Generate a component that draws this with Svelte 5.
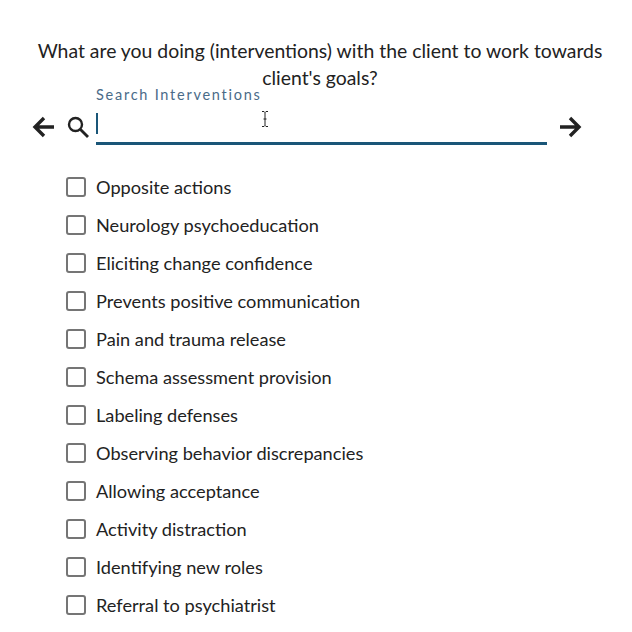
<script lang="ts">
  const items = [
    'Opposite actions',
    'Neurology psychoeducation',
    'Eliciting change confidence',
    'Prevents positive communication',
    'Pain and trauma release',
    'Schema assessment provision',
    'Labeling defenses',
    'Observing behavior discrepancies',
    'Allowing acceptance',
    'Activity distraction',
    'Identifying new roles',
    'Referral to psychiatrist',
  ]
  let query = $state('')
  let checked: Record<string, boolean> = $state({})
</script>

<div class="page">
  <h2 class="question">What are you doing (interventions) with the client to work towards client's goals?</h2>

  <div class="search-row">
    <button class="nav back" aria-label="Back">
      <svg width="24" height="24" viewBox="0 0 24 24"><path d="M23 12H5M13 3 4 12l9 9" fill="none" stroke="#222" stroke-width="3.400"/></svg>
    </button>
    <svg class="search-icon" width="24" height="24" viewBox="0 0 24 24"><circle cx="9.500" cy="9.500" r="6.500" fill="none" stroke="#222" stroke-width="2.400"/><path d="m14.500 14.500 7.500 7.500" stroke="#222" stroke-width="2.800"/></svg>
    <label class="field">
      <span class="field-label">Search Interventions</span>
      <span class="caret"></span>
      <input bind:value={query} aria-label="Search Interventions" />
      <svg class="ibeam" width="8" height="16" viewBox="0 0 8 16"><path d="M1 .5h2l1 1 1-1h2M4 1.500v13M1 15.500h2l1-1 1 1h2M2.500 8h3" fill="none" stroke="#222" stroke-width="1"/></svg>
    </label>
    <button class="nav forward" aria-label="Forward">
      <svg width="24" height="24" viewBox="0 0 24 24"><path d="M1 12h18M11 3l9 9-9 9" fill="none" stroke="#222" stroke-width="3.400"/></svg>
    </button>
  </div>

  <ul class="list">
    {#each items as item}
      <li>
        <label class="row">
          <input type="checkbox" bind:checked={checked[item]} />
          <span class="box"></span>
          <span>{item}</span>
        </label>
      </li>
    {/each}
  </ul>
</div>

<style>
  :global(body) {
    background: #fff;
    overflow: hidden;
  }

  .page {
    width: 632px;
    height: 632px;
    padding-top: 37px;
    box-sizing: border-box;
    font-family: Lato, "Open Sans", sans-serif;
    color: #222;
  }

  .question {
    margin: 0 0 0 30px;
    width: 580px;
    text-align: center;
    font-size: 19.400px;
    font-weight: 400;
    line-height: 27px;
  }

  .search-row {
    display: flex;
    align-items: flex-start;
    padding-left: 31px;
    margin-top: -5px;
  }

  .nav {
    background: none;
    border: none;
    padding: 0;
    width: 24px;
    height: 24px;
    margin-top: 29px;
    cursor: pointer;
  }

  .search-icon {
    margin: 29px 0 0 11px;
    flex-shrink: 0;
  }

  .field {
    position: relative;
    display: block;
    width: 451px;
    height: 56px;
    margin-left: 6px;
    border-bottom: 3px solid #1a5678;
    box-sizing: content-box;
  }

  .field-label {
    display: block;
    font-size: 14.500px;
    line-height: 18px;
    letter-spacing: 1.750px;
    color: #4a6b88;
  }

  .field input {
    border: none;
    outline: none;
    width: 100%;
    height: 36px;
    padding: 0;
    background: transparent;
    font: inherit;
  }

  .caret {
    position: absolute;
    left: 0;
    top: 27px;
    width: 2px;
    height: 21px;
    background: #1a5678;
  }

  .ibeam {
    position: absolute;
    left: 165px;
    top: 25px;
  }

  .forward {
    margin-left: 12px;
  }

  .list {
    list-style: none;
    margin: 30px 0 0;
    padding: 0 0 0 66px;
    display: flex;
    flex-direction: column;
    gap: 14px;
  }

  .row {
    display: flex;
    align-items: center;
    gap: 10px;
    height: 24px;
    font-size: 18.200px;
    color: #222;
    cursor: pointer;
  }

  .row input {
    display: none;
  }

  .box {
    width: 20px;
    height: 20px;
    box-sizing: border-box;
    border: 2px solid #757575;
    border-radius: 3px;
  }
</style>
